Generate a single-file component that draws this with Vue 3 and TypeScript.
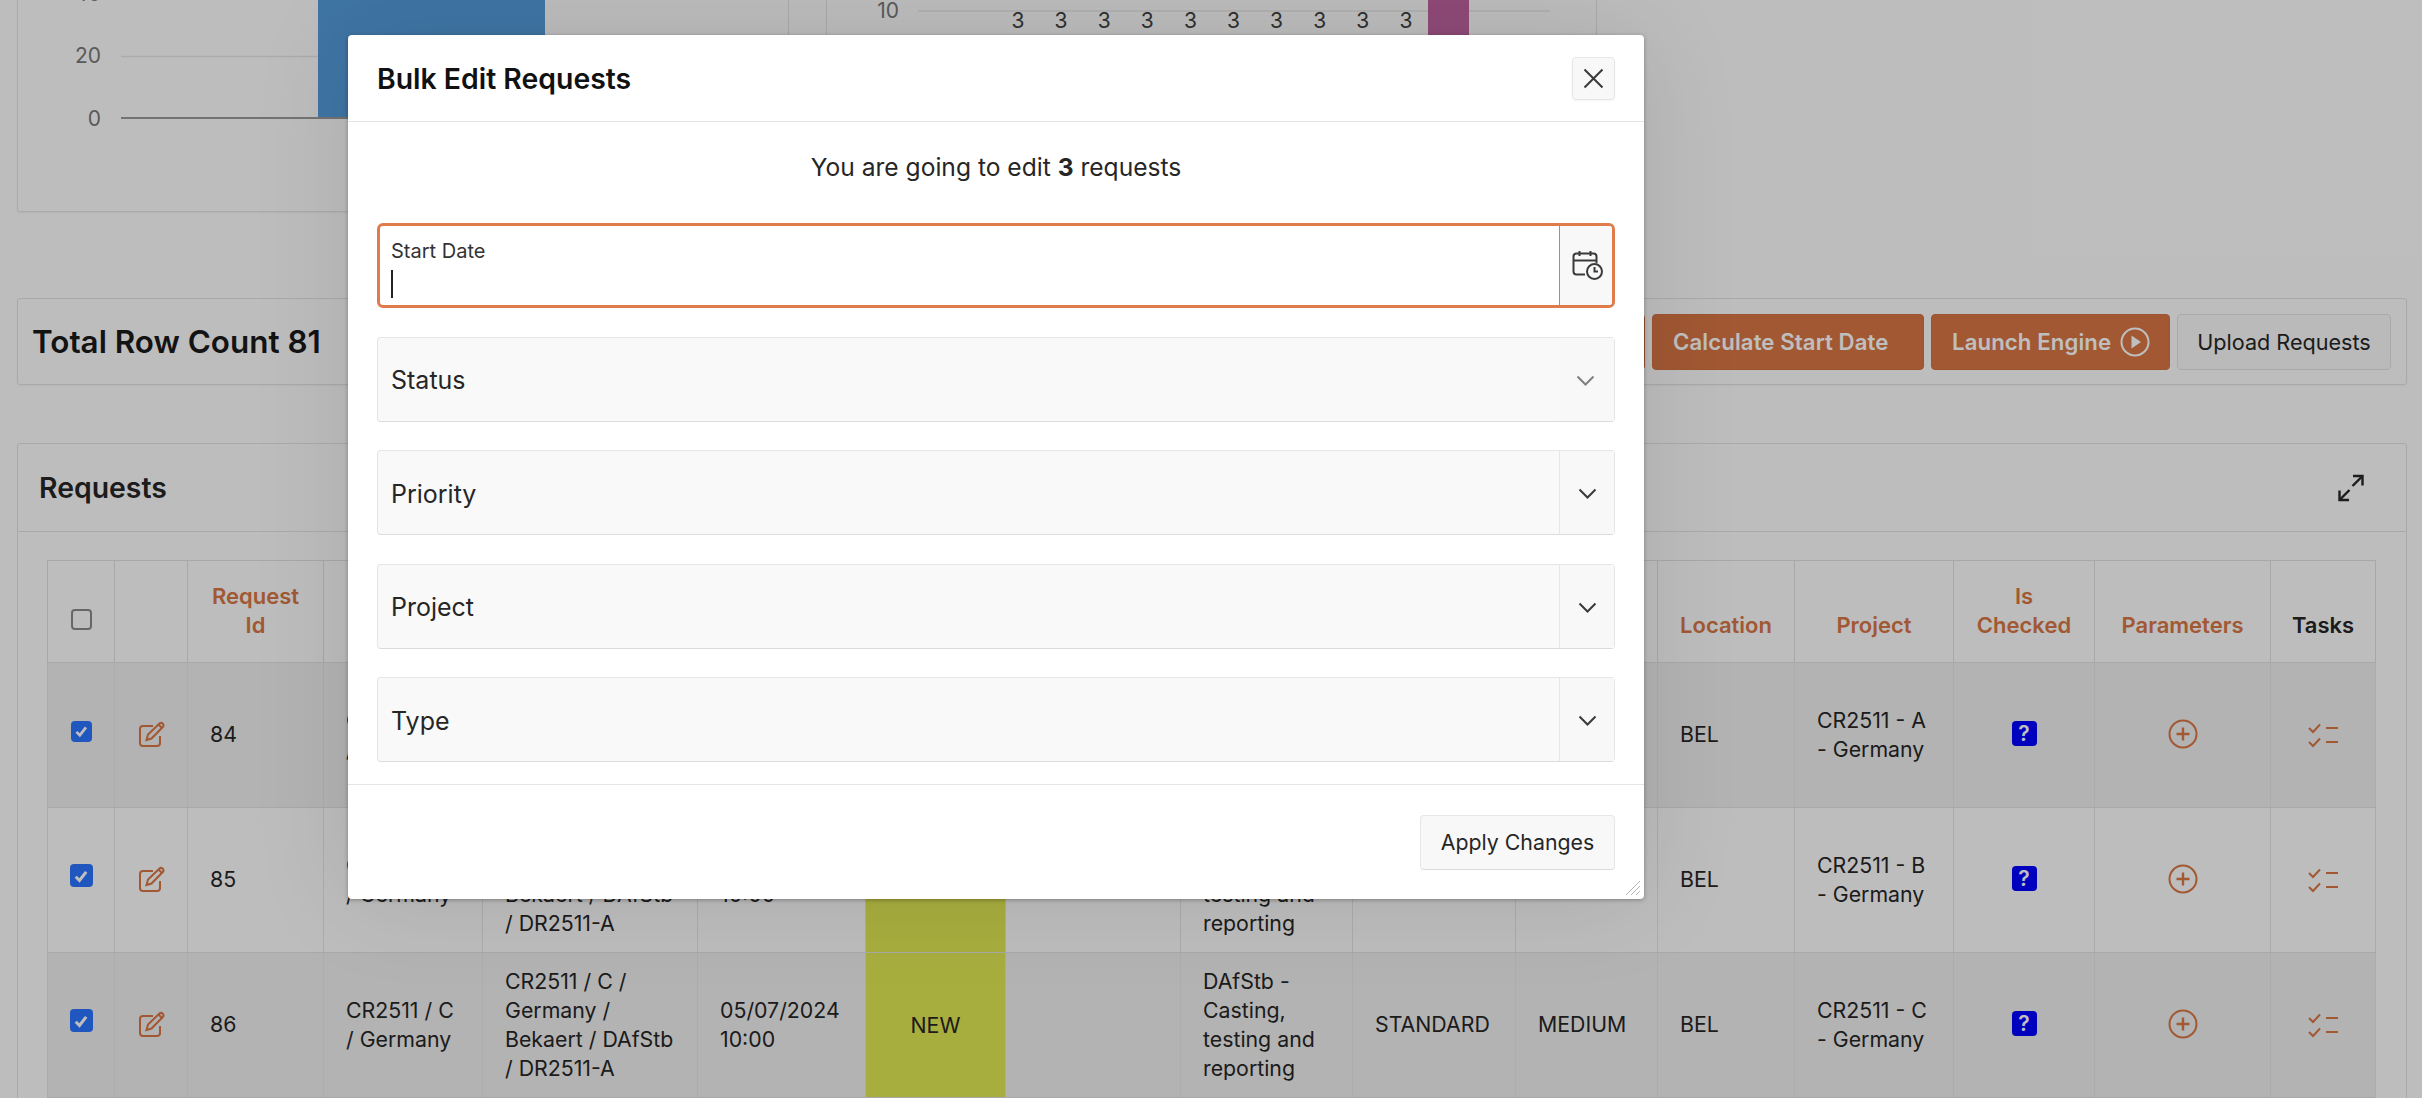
<script setup lang="ts">
interface Row {
  id: number
  letter: string
  tone: string
  box: string
}

const columnWidths: number[] = [67, 73, 136, 159, 215, 168, 140, 175, 172, 163, 142, 137, 159, 141, 176, 105]

const rows: Row[] = [
  { id: 84, letter: 'A', tone: 'shade', box: 'small' },
  { id: 85, letter: 'B', tone: 'plain', box: 'large' },
  { id: 86, letter: 'C', tone: 'shade', box: 'large' }
]

const selects: { label: string; split: boolean }[] = [
  { label: 'Status', split: false },
  { label: 'Priority', split: true },
  { label: 'Project', split: true },
  { label: 'Type', split: true }
]

const labelPositions: number[] = [0, 1, 2, 3, 4, 5, 6, 7, 8, 9].map((i) => 191 + i * 43.1)
</script>

<template>
  <div class="page">
    <section class="charts">
      <div class="card">
        <svg class="chart" width="770" height="210" viewBox="0 0 770 210">
          <line x1="103" y1="56.5" x2="750" y2="56.5" class="grid" />
          <rect x="300" y="0" width="227" height="118" fill="#549ddb" />
          <line x1="103" y1="118" x2="750" y2="118" class="axis" />
          <text x="83" y="1" text-anchor="end" class="tick">40</text>
          <text x="83" y="63" text-anchor="end" class="tick">20</text>
          <text x="83" y="126" text-anchor="end" class="tick">0</text>
        </svg>
      </div>
      <div class="card">
        <svg class="chart" width="770" height="210" viewBox="0 0 770 210">
          <line x1="91" y1="11" x2="723" y2="11" class="grid" />
          <text x="72" y="18" text-anchor="end" class="tick">10</text>
          <text v-for="x in labelPositions" :key="x" :x="x" y="28" text-anchor="middle" class="count">3</text>
          <rect x="601" y="0" width="41" height="118" fill="#bf63a0" />
        </svg>
      </div>
    </section>

    <section class="toolbar">
      <h2 class="count-title">Total Row Count 81</h2>
      <div class="actions">
        <button class="btn primary spacer" type="button" aria-hidden="true"></button>
        <button class="btn primary calc" type="button">Calculate Start Date</button>
        <button class="btn primary launch" type="button">
          Launch Engine
          <svg width="30" height="30" viewBox="0 0 30 30" fill="none">
            <circle cx="15" cy="15" r="13.5" stroke="currentColor" stroke-width="2" />
            <path d="M11.5 8.5 L21 15 L11.5 21.5 Z" fill="currentColor" />
          </svg>
        </button>
        <button class="btn upload" type="button">Upload Requests</button>
      </div>
    </section>

    <section class="panel">
      <header class="panel-head">
        <h3 class="panel-title">Requests</h3>
        <svg class="expand" width="26" height="28" viewBox="0 0 26 28" fill="none" stroke="#262626" stroke-width="2.4">
          <path d="M15 2 H24.5 V11.5" />
          <path d="M24 2.5 L14.5 12" />
          <path d="M1.5 16.5 V26 H11" />
          <path d="M2 25.5 L11.5 16" />
        </svg>
      </header>
      <div class="panel-body">
        <table class="grid-table">
          <colgroup>
            <col v-for="(w, i) in columnWidths" :key="i" :style="{ width: w + 'px' }" />
          </colgroup>
          <thead>
            <tr>
              <th class="head-check"><span class="box head-box"></span></th>
              <th></th>
              <th>Request<br />Id</th>
              <th></th>
              <th></th>
              <th></th>
              <th></th>
              <th></th>
              <th></th>
              <th></th>
              <th></th>
              <th>Location</th>
              <th>Project</th>
              <th>Is<br />Checked</th>
              <th>Parameters</th>
              <th class="dark">Tasks</th>
            </tr>
          </thead>
          <tbody>
            <tr v-for="row in rows" :key="row.id" :class="row.tone">
              <td class="center">
                <span class="box checked" :class="row.box">
                  <svg viewBox="0 0 24 24" fill="none" stroke="#fff" stroke-width="4">
                    <path d="M5 13 L10 18 L19 6.5" />
                  </svg>
                </span>
              </td>
              <td class="center">
                <svg class="icon" width="27" height="27" viewBox="0 0 27 27" fill="none" stroke="#d77644" stroke-width="2">
                  <path d="M15 5 H5 Q2 5 2 8 V22 Q2 25 5 25 H19 Q22 25 22 22 V15" />
                  <path d="M8.5 19 L10 13.5 L21.5 2.5 Q23 1.2 24.8 2.7 Q26.2 4.5 24.8 6 L13.5 17.5 Z" />
                  <path d="M20.5 3.5 L24 7" />
                </svg>
              </td>
              <td>{{ row.id }}</td>
              <td>CR2511 / {{ row.letter }} / Germany</td>
              <td>CR2511 / {{ row.letter }} / Germany / Bekaert / DAfStb / DR2511-A</td>
              <td>05/07/2024 10:00</td>
              <td class="state">NEW</td>
              <td></td>
              <td>DAfStb - Casting, testing and reporting</td>
              <td>STANDARD</td>
              <td>MEDIUM</td>
              <td>BEL</td>
              <td>CR2511 - {{ row.letter }} - Germany</td>
              <td class="center"><span class="badge">?</span></td>
              <td class="center">
                <svg class="icon" width="30" height="30" viewBox="0 0 30 30" fill="none" stroke="#d77644" stroke-width="2">
                  <circle cx="15" cy="15" r="13.5" />
                  <path d="M15 8.5 V21.5 M8.5 15 H21.5" stroke-width="2.4" />
                </svg>
              </td>
              <td class="center">
                <svg class="icon" width="30" height="25" viewBox="0 0 30 25" fill="none" stroke="#d77644" stroke-width="2">
                  <path d="M1 5 L5 9 L12 1.5" />
                  <path d="M1 19 L5 23 L12 15.5" />
                  <path d="M18 5 H30 M18 19 H30" />
                </svg>
              </td>
            </tr>
          </tbody>
        </table>
      </div>
    </section>

    <div class="backdrop"></div>

    <div class="modal" role="dialog">
      <header class="modal-head">
        <h1 class="modal-title">Bulk Edit Requests</h1>
        <button class="close" type="button" aria-label="Close">
          <svg width="21" height="21" viewBox="0 0 21 21" fill="none" stroke="#3a3a3a" stroke-width="2">
            <path d="M1.5 1.5 L19.5 19.5 M19.5 1.5 L1.5 19.5" />
          </svg>
        </button>
      </header>

      <div class="modal-body">
        <p class="intro">You are going to edit <strong>3</strong> requests</p>

        <div class="field focused">
          <div class="field-main stacked">
            <span class="float-label">Start Date</span>
            <span class="caret"></span>
          </div>
          <div class="addon">
            <svg width="32" height="31" viewBox="0 0 32 31" fill="none" stroke="#3a3a3a" stroke-width="2">
              <path d="M13 24.5 H4.5 Q1.5 24.5 1.5 21.5 V6.5 Q1.5 3.5 4.5 3.5 H21.5 Q24.5 3.5 24.5 6.5 V13" />
              <path d="M1.5 10.5 H24.5" />
              <path d="M7.5 1 V6 M18.5 1 V6" />
              <circle cx="22.5" cy="21.5" r="7.5" />
              <path d="M22.5 17 V21.5 H26" />
            </svg>
          </div>
        </div>

        <div v-for="item in selects" :key="item.label" class="field">
          <div class="field-main">{{ item.label }}</div>
          <div class="addon" :class="{ open: !item.split }">
            <svg width="19" height="11" viewBox="0 0 19 11" fill="none" :stroke="item.split ? '#3a3a3a' : '#808080'" stroke-width="2">
              <path d="M1.5 1.5 L9.5 9.5 L17.5 1.5" />
            </svg>
          </div>
        </div>
      </div>

      <footer class="modal-foot">
        <button class="btn apply" type="button">Apply Changes</button>
      </footer>

      <svg class="grip" width="16" height="16" viewBox="0 0 16 16" stroke="#b5b5b5" stroke-width="1">
        <path d="M15 1 L1 15 M15 6 L6 15 M15 11 L11 15" />
      </svg>
    </div>
  </div>
</template>

<style scoped>
* {
  box-sizing: border-box;
}

.page {
  position: relative;
  width: 2422px;
  height: 1098px;
  overflow: hidden;
  background: #fdfdfd;
  font-family: Inter, "Liberation Sans", sans-serif;
  color: #262626;
}

.charts {
  display: grid;
  grid-template-columns: repeat(3, 771.67px);
  column-gap: 37px;
  height: 212px;
  padding-left: 17px;
}

.card {
  height: 212px;
  background: #fdfdfd;
  border: 1px solid #e4e4e4;
  border-top: 0;
  border-radius: 0 0 3px 3px;
  box-shadow: 0 1px 2px rgba(0, 0, 0, 0.06);
  overflow: hidden;
}

.chart {
  display: block;
}

.grid {
  stroke: #e6e6e6;
  stroke-width: 1.5;
}

.axis {
  stroke: #9a9a9a;
  stroke-width: 2;
}

.tick {
  font-family: Inter, "Liberation Sans", sans-serif;
  font-size: 21px;
  fill: #787878;
}

.count {
  font-family: Inter, "Liberation Sans", sans-serif;
  font-size: 21px;
  fill: #404040;
}

.toolbar {
  display: flex;
  align-items: center;
  justify-content: space-between;
  height: 87px;
  width: 2390px;
  margin: 86px 0 0 17px;
  padding: 0 15px 0 14px;
  border: 1px solid #e2e2e2;
  border-radius: 3px;
  box-shadow: 0 1px 2px rgba(0, 0, 0, 0.05);
}

.count-title {
  margin: 0;
  font-size: 31.4px;
  font-weight: 600;
  color: #1a1a1a;
}

.actions {
  display: flex;
  gap: 7px;
  height: 56px;
}

.btn {
  display: flex;
  align-items: center;
  justify-content: center;
  height: 100%;
  border-radius: 4px;
  font-family: inherit;
  font-size: 21.6px;
  cursor: pointer;
}

.primary {
  justify-content: flex-start;
  padding: 0 0 0 20px;
  background: #d77644;
  border: 1px solid #d27040;
  color: #fff;
  font-size: 22.2px;
  font-weight: 600;
  letter-spacing: 0.1px;
}

.spacer {
  width: 200px;
}

.calc {
  width: 272px;
}

.launch {
  width: 239px;
  gap: 9px;
}

.upload {
  width: 214px;
  background: #f8f8f8;
  border: 1px solid #e2e2e2;
  color: #262626;
  font-weight: 400;
}

.panel {
  width: 2390px;
  height: 800px;
  margin: 58px 0 0 17px;
  border: 1px solid #e2e2e2;
  border-radius: 3px;
}

.panel-head {
  display: flex;
  align-items: center;
  justify-content: space-between;
  height: 88px;
  padding: 0 42px 0 21px;
  border-bottom: 1px solid #e2e2e2;
}

.panel-title {
  margin: 0;
  font-size: 28.4px;
  font-weight: 600;
  color: #262626;
}

.panel-body {
  padding: 28px 29px 0 29px;
}

.grid-table {
  width: 2328px;
  table-layout: fixed;
  border-collapse: collapse;
  font-size: 21.3px;
  line-height: 29px;
}

.grid-table th,
.grid-table td {
  border: 1px solid #e1e1e1;
  padding: 0 22px;
}

.grid-table th {
  height: 102px;
  padding: 0 2px 22px;
  vertical-align: bottom;
  text-align: center;
  font-size: 22px;
  font-weight: 600;
  color: #d77644;
}

.grid-table th.dark {
  color: #262626;
}

.grid-table th.head-check {
  padding-bottom: 28px;
}

.grid-table td {
  height: 145px;
  padding-bottom: 1px;
  vertical-align: middle;
  border-color: #e6e6e6 #e6e6e6 #e1e1e1;
}

.grid-table td.center {
  padding: 0;
  text-align: center;
}

.grid-table td.state {
  padding: 0;
  text-align: center;
  background: #e0e853;
}

.shade td {
  background: #efefef;
}

.plain td {
  background: #fdfdfd;
}

.box {
  display: inline-flex;
  align-items: center;
  justify-content: center;
  vertical-align: middle;
  border-radius: 4px;
}

.head-box {
  width: 21px;
  height: 21px;
  margin-bottom: 3px;
  background: #fdfdfd;
  border: 2px solid #8a8a8a;
}

.checked {
  background: #2b74ff;
  margin-bottom: 9px;
}

.checked svg {
  width: 78%;
  height: 78%;
}

.small {
  width: 21px;
  height: 21px;
}

.large {
  width: 23px;
  height: 23px;
}

.icon {
  display: inline-block;
  vertical-align: middle;
  margin-bottom: 2px;
}

.badge {
  display: inline-block;
  width: 25px;
  height: 25px;
  margin-bottom: 5px;
  background: #0000ff;
  border-radius: 4px;
  color: #fff;
  font-size: 21px;
  font-weight: 600;
  line-height: 25px;
  vertical-align: middle;
}

.backdrop {
  position: absolute;
  inset: 0;
  background: rgba(0, 0, 0, 0.25);
}

.modal {
  position: absolute;
  left: 348px;
  top: 35px;
  display: flex;
  flex-direction: column;
  width: 1296px;
  height: 864px;
  background: #fff;
  border-radius: 4px;
  box-shadow: 0 0 100px rgba(0, 0, 0, 0.1), 0 1px 4px rgba(0, 0, 0, 0.3);
}

.modal-head {
  display: flex;
  align-items: center;
  justify-content: space-between;
  flex: none;
  height: 87px;
  padding: 0 29px;
  border-bottom: 1px solid #e5e5e5;
}

.modal-title {
  margin: 1px 0 0;
  font-size: 28.4px;
  font-weight: 600;
  color: #111;
}

.close {
  display: flex;
  align-items: center;
  justify-content: center;
  width: 43px;
  height: 43px;
  padding: 0;
  background: #f8f8f8;
  border: 1px solid #e6e6e6;
  border-radius: 4px;
  box-shadow: 0 1px 2px rgba(0, 0, 0, 0.04);
  cursor: pointer;
}

.modal-body {
  display: flex;
  flex: 1;
  flex-direction: column;
  gap: 28.5px;
  padding: 0 29px 0 29px;
}

.intro {
  display: flex;
  align-items: center;
  justify-content: center;
  gap: 0.28em;
  height: 73.5px;
  margin: 0 0 -1px;
  padding-top: 17px;
  font-size: 24.6px;
  color: #262626;
}

.intro strong {
  font-weight: 700;
}

.field {
  display: flex;
  flex: none;
  height: 85px;
  background: #f9f9f9;
  border: 1px solid #e6e6e6;
  border-bottom-color: #dcdcdc;
  border-radius: 4px;
}

.field-main {
  display: flex;
  flex: 1;
  align-items: center;
  padding: 2px 0 0 13px;
  font-size: 25px;
  color: #262626;
}

.addon {
  display: flex;
  flex: none;
  align-items: center;
  justify-content: center;
  width: 55px;
  padding-top: 2px;
  background: #f8f8f8;
  border-left: 1px solid #e6e6e6;
}

.addon.open {
  border-left: 0;
  padding-right: 2px;
}

.focused {
  background: #fff;
  border: 3px solid #e07c4c;
  border-radius: 6px;
}

.focused .addon {
  width: 53px;
  padding: 0 0 0 4px;
  border-left: 1px solid #e07c4c;
  border-radius: 0 3px 3px 0;
}

.stacked {
  flex-direction: column;
  align-items: flex-start;
  padding: 13px 0 0 11px;
}

.float-label {
  font-size: 20px;
  line-height: 24px;
  color: #333;
}

.caret {
  width: 2px;
  height: 28px;
  margin-top: 7px;
  background: #222;
}

.modal-foot {
  display: flex;
  flex: none;
  justify-content: flex-end;
  height: 115px;
  padding: 30px 29px 30px 0;
  border-top: 1px solid #e5e5e5;
}

.apply {
  width: 195px;
  height: 55px;
  padding: 0 0 2px;
  background: #f8f8f8;
  border: 1px solid #e6e6e6;
  border-bottom-color: #dcdcdc;
  color: #262626;
  font-size: 21.3px;
  font-weight: 400;
}

.grip {
  position: absolute;
  right: 3px;
  bottom: 3px;
}
</style>
